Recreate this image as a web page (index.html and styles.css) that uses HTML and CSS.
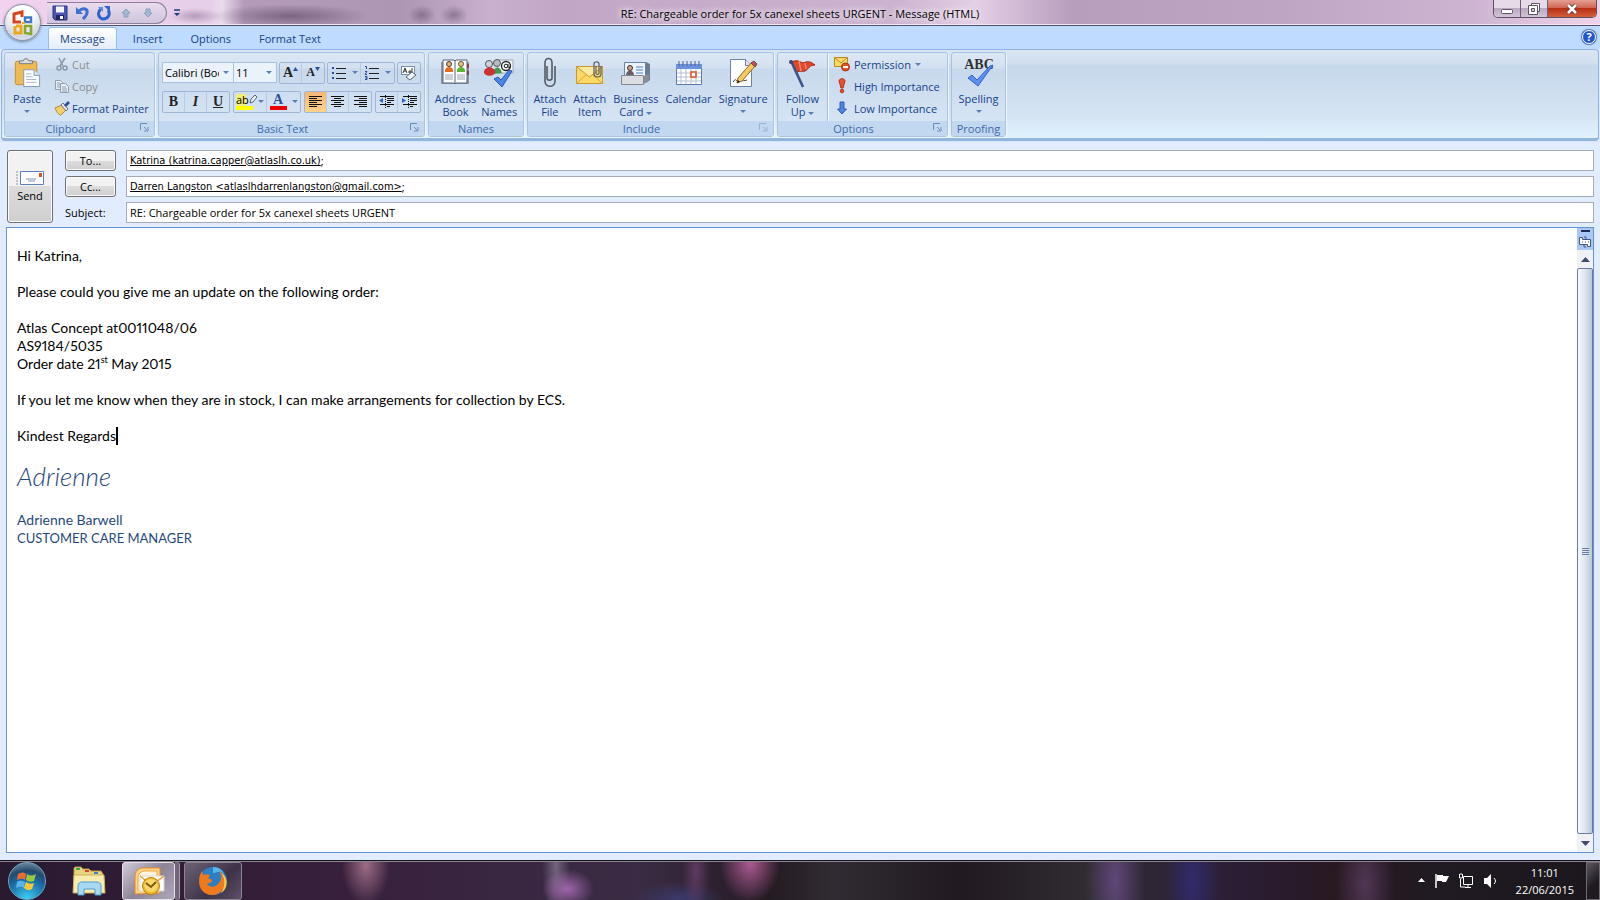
FILE: index.html
```
<!DOCTYPE html>
<html lang="en">
<head>
    <meta charset="UTF-8">
    <meta name="viewport" content="width=device-width, initial-scale=1.0">
    <title>RE: Chargeable order for 5x canexel sheets URGENT - Message (HTML)</title>
    <link rel="stylesheet" href="styles.css">
</head>
<body>

<!-- Title bar -->
<header class="titlebar">
    <div class="title-left">
        <div class="quick-access">
            <button class="qa-btn" aria-label="Save">
                <svg width="16" height="16" viewBox="0 0 16 16"><path d="M1 1h14v14H3l-2-2z" fill="#4a55b5" stroke="#2c357f"/><path d="M4 1.500h8v6H4z" fill="#f4f6ff"/><path d="M4 10h8v5H4z" fill="#20285e"/><path d="M8 11h3v3H8z" fill="#fff"/></svg>
            </button>
            <button class="qa-btn" aria-label="Undo">
                <svg width="16" height="16" viewBox="0 0 16 16"><path d="M5 6c4-4 9-2 8 2-.5 3-2 4-4 6" fill="none" stroke="#3c6fd0" stroke-width="3"/><path d="M2 2v7h7z" fill="#3c6fd0"/></svg>
            </button>
            <button class="qa-btn" aria-label="Redo">
                <svg width="16" height="16" viewBox="0 0 16 16"><path d="M5 4c-4 3-3 9 2 10 5 0 8-5 5-9" fill="none" stroke="#2f62cc" stroke-width="3"/><path d="M8 1h6v6z" fill="#2f62cc"/><path d="M2 2h5v5z" fill="#5d8be0"/></svg>
            </button>
            <button class="qa-btn" aria-label="Previous item">
                <svg width="16" height="16" viewBox="0 0 16 16"><path d="M8 4l4 4h-2v4H6V8H4z" fill="#a5b8d2" stroke="#8a9fbd"/></svg>
            </button>
            <button class="qa-btn" aria-label="Next item">
                <svg width="16" height="16" viewBox="0 0 16 16"><path d="M8 12l4-4h-2V4H6v4H4z" fill="#a5b8d2" stroke="#8a9fbd"/></svg>
            </button>
        </div>
        <button class="qa-more" aria-label="Customize Quick Access Toolbar">
            <svg width="8" height="8" viewBox="0 0 8 8"><path d="M1 1h6" stroke="#1e3c78" stroke-width="1.500"/><path d="M1 4h6L4 7z" fill="#1e3c78"/></svg>
        </button>
    </div>
    <h1 class="window-title">RE: Chargeable order for 5x canexel sheets URGENT - Message (HTML)</h1>
    <div class="title-right">
        <div class="window-buttons">
            <button class="win-btn" aria-label="Minimize">
                <svg width="14" height="12" viewBox="0 0 14 12"><rect x="1.500" y="6.500" width="11" height="4" rx="1" fill="#fff" stroke="#5b5463"/></svg>
            </button>
            <button class="win-btn" aria-label="Restore">
                <svg width="14" height="14" viewBox="0 0 14 14"><path d="M4.500 1.500h8v8h-8z" fill="#fff" stroke="#5b5463"/><path d="M1.500 3.500h9v9h-9z" fill="#fff" stroke="#5b5463"/><path d="M4.500 6.500h3v3h-3z" fill="#ccc" stroke="#5b5463"/></svg>
            </button>
            <button class="win-btn win-close" aria-label="Close">
                <svg width="14" height="12" viewBox="0 0 14 12"><path d="M3 2l8 8M11 2l-8 8" stroke="#6b3030" stroke-width="4.500"/><path d="M3 2l8 8M11 2l-8 8" stroke="#fff" stroke-width="2.600"/></svg>
            </button>
        </div>
    </div>
</header>

<button class="office-button" aria-label="Office Button">
    <svg width="24" height="26" viewBox="0 0 24 26" fill="none" stroke-width="3">
        <path d="M10 12H3V4l8-2v5" stroke="#d4471c"/>
        <path d="M14 7.500h6V12h-6z" stroke="#3f78c8" stroke-width="2.400"/>
        <path d="M5 16h5v7H4v-7" stroke="#eda61d"/>
        <path d="M14 16h6v8l-6-1z" stroke="#86a92c" stroke-width="2.600"/>
        <path d="M11 13h3" stroke="#f6a821" stroke-width="2"/>
    </svg>
</button>

<!-- Ribbon tabs -->
<nav class="tabs">
    <a href="#message" class="tab active">Message</a>
    <a href="#insert" class="tab">Insert</a>
    <a href="#options" class="tab">Options</a>
    <a href="#format" class="tab">Format Text</a>
    <button class="help" aria-label="Help">?</button>
</nav>

<!-- Ribbon -->
<section class="ribbon" id="message">
    <div class="group group-clipboard">
        <div class="group-body">
            <button class="big-btn">
                <svg width="28" height="32" viewBox="0 0 30 32"><rect x="2.500" y="3.500" width="23" height="25" rx="2" fill="#f0b954" stroke="#c88a2c"/><path d="M7 6V3h4c0-3 6-3 6 0h4v3z" fill="#d9dbe0" stroke="#6e7480"/><path d="M11.500 12.500h11l6 6v12h-17z" fill="#fff" stroke="#7d93b5"/><path d="M22.500 12.500v6h6" fill="#dce6f4" stroke="#7d93b5"/><path d="M14 17h6M14 20h7M14 23h11M14 26h11" stroke="#9db2d0"/></svg>
                <span>Paste</span>
                <i class="arrow"></i>
            </button>
            <div class="small-list">
                <button class="small-btn" disabled>
                    <svg width="16" height="16" viewBox="0 0 16 16" fill="none" stroke="#8b98aa" stroke-width="1.500"><path d="M5 2l4 8M11 2l-5 8"/><circle cx="5" cy="12" r="2"/><circle cx="11" cy="12" r="2"/></svg>
                    Cut
                </button>
                <button class="small-btn" disabled>
                    <svg width="16" height="16" viewBox="0 0 16 16" fill="#e9eef5" stroke="#8f9db1"><path d="M1.500 2.500h5l2 2v7h-7z"/><path d="M6.500 5.500h5l3 3v6h-8z"/><path d="M8 9h4M8 11h5M8 13h5M3 5h3M3 7h3M3 9h3"/></svg>
                    Copy
                </button>
                <button class="small-btn">
                    <svg width="16" height="16" viewBox="0 0 16 16"><path d="M1 8l7-3 4 5-5 5c-2 0-4-2-6-7z" fill="#f3cf6a" stroke="#b58a2e"/><path d="M7 5l2-2 5 6-2 2z" fill="#e8e8ee" stroke="#6b7180"/><path d="M10 5l4-4 2 2-4 4z" fill="#2d4f9c"/></svg>
                    Format Painter
                </button>
            </div>
        </div>
        <div class="group-label">Clipboard<button class="launcher" aria-label="Clipboard options"><svg width="9" height="9" viewBox="0 0 9 9"><path d="M.5 7V.5H7M4 4l3 3M8 4v4H4" fill="none" stroke="#6c8cba"/></svg></button></div>
    </div>

    <div class="group group-text">
        <div class="group-body text-tools">
            <div class="tool-row">
                <div class="combos">
                    <span class="combo combo-font"><select aria-label="Font"><option>Calibri (Body)</option></select></span>
                    <span class="combo combo-size"><select aria-label="Font size"><option>11</option></select></span>
                </div>
                <div class="tool-set">
                    <button class="tool grow" aria-label="Grow font">A<svg width="5" height="4" viewBox="0 0 5 4"><path d="M0 4h5L2.500 0z" fill="#2b4f94"/></svg></button>
                    <button class="tool shrink" aria-label="Shrink font">A<svg width="5" height="4" viewBox="0 0 5 4"><path d="M0 0h5L2.500 4z" fill="#2b4f94"/></svg></button>
                </div>
                <div class="tool-set">
                    <button class="tool wide" aria-label="Bullets"><svg width="16" height="16" viewBox="0 0 16 16"><path d="M5 3.500h10M5 8.500h10M5 13.500h10" stroke="#222"/><path d="M1 2h2v2H1zM1 7h2v2H1zM1 12h2v2H1z" fill="#2b4f94"/></svg><i class="arrow"></i></button>
                    <button class="tool wide" aria-label="Numbering"><svg width="16" height="16" viewBox="0 0 16 16"><path d="M5 3.500h10M5 8.500h10M5 13.500h10" stroke="#222"/><path d="M1 1.500h1.500V4M1 6.500h2l-2 3h2M1 11.500h2v3H1M1 13h2" fill="none" stroke="#2b4f94"/></svg><i class="arrow"></i></button>
                </div>
                <div class="tool-set">
                    <button class="tool" aria-label="Clear formatting"><svg width="18" height="18" viewBox="0 0 18 18"><rect x="1.500" y="2.500" width="13" height="8" fill="#fff" stroke="#7c8fae"/><path d="M3 9l2-5 2 5M4 7h2M9 7h2v2H9zM12 4v5" fill="none" stroke="#333"/><path d="M6 13l6-5 4 3-6 5z" fill="#f4f6fa" stroke="#59657a"/></svg></button>
                </div>
            </div>
            <div class="tool-row">
                <div class="tool-set">
                    <button class="tool bold">B</button>
                    <button class="tool italic">I</button>
                    <button class="tool underline">U</button>
                </div>
                <div class="tool-set">
                    <button class="tool wide" aria-label="Highlight"><span class="swatch swatch-yellow">ab<svg width="9" height="10" viewBox="0 0 9 10"><path d="M1 9l1-4 4-4 2 2-4 5z" fill="#e9edf4" stroke="#59657a"/></svg></span><i class="arrow"></i></button>
                    <button class="tool wide" aria-label="Font color"><span class="swatch swatch-red">A</span><i class="arrow"></i></button>
                </div>
                <div class="tool-set">
                    <button class="tool pressed" aria-label="Align left"><svg width="15" height="13" viewBox="0 0 15 13"><path d="M1 1.500h13M1 3.500h8M1 5.500h13M1 7.500h8M1 9.500h13M1 11.500h8" stroke="#111"/></svg></button>
                    <button class="tool" aria-label="Center"><svg width="15" height="13" viewBox="0 0 15 13"><path d="M1 1.500h13M4 3.500h7M1 5.500h13M4 7.500h7M1 9.500h13M4 11.500h7" stroke="#111"/></svg></button>
                    <button class="tool" aria-label="Align right"><svg width="15" height="13" viewBox="0 0 15 13"><path d="M1 1.500h13M6 3.500h8M1 5.500h13M6 7.500h8M1 9.500h13M6 11.500h8" stroke="#111"/></svg></button>
                </div>
                <div class="tool-set">
                    <button class="tool" aria-label="Decrease indent"><svg width="17" height="14" viewBox="0 0 17 14"><path d="M2 1.500h14M9 3.500h7M9 5.500h7M9 7.500h4M2 9.500h14M9 11.500h3" stroke="#111"/><path d="M7.500 0v14" stroke="#111" stroke-dasharray="1 1"/><path d="M5 3v5L1 5.500z" fill="#2f62cc"/></svg></button>
                    <button class="tool" aria-label="Increase indent"><svg width="17" height="14" viewBox="0 0 17 14"><path d="M2 1.500h14M9 3.500h7M9 5.500h7M9 7.500h4M2 9.500h14M9 11.500h3" stroke="#111"/><path d="M7.500 0v14" stroke="#111" stroke-dasharray="1 1"/><path d="M1 3v5l4-2.500z" fill="#2f62cc"/></svg></button>
                </div>
            </div>
        </div>
        <div class="group-label">Basic Text<button class="launcher" aria-label="Font options"><svg width="9" height="9" viewBox="0 0 9 9"><path d="M.5 7V.5H7M4 4l3 3M8 4v4H4" fill="none" stroke="#6c8cba"/></svg></button></div>
    </div>

    <div class="group group-names">
        <div class="group-body">
            <button class="big-btn">
                <svg width="30" height="30" viewBox="0 0 30 30"><path d="M1 4h28v22H1z" fill="#8c97a8"/><path d="M3 2h11l1 1 1-1h11v23H16l-1 1-1-1H3z" fill="#fdfdfe" stroke="#59657a"/><path d="M15 3v22" stroke="#59657a"/><circle cx="9" cy="6" r="2.500" fill="#e9b184" stroke="#4b372c"/><path d="M5 14v-2c1-4 7-4 8 0v2z" fill="#ea6a1c"/><circle cx="21" cy="6" r="2.500" fill="#e8c48a" stroke="#6b5a3c"/><path d="M17 14v-2c1-4 7-4 8 0v2z" fill="#5cb52f"/><path d="M5 17h8M5 19h8M5 21h8M17 17h8M17 19h8M17 21h8" stroke="#9aa5b7"/><path d="M28 6v4M28 13v4" stroke="#844" stroke-width="2"/></svg>
                <span>Address<br>Book</span>
            </button>
            <button class="big-btn">
                <svg width="32" height="30" viewBox="0 0 32 30"><path d="M15 2h15v13H15z" fill="#f9fafc" stroke="#9aa5b7"/><circle cx="23" cy="8" r="4.500" fill="none" stroke="#222" stroke-width="1.300"/><circle cx="23" cy="8" r="1.800" fill="none" stroke="#222"/><path d="M25 6v3c0 2 2 1 2-1" fill="none" stroke="#222"/><circle cx="14" cy="5" r="3.500" fill="#b7bcc6" stroke="#555"/><path d="M10 16c0-8 8-8 9-1z" fill="#3b9b4b"/><circle cx="6" cy="6" r="3.500" fill="#cfd2d9" stroke="#555"/><path d="M1 14c0-6 11-6 11 0 0 5-11 5-11 0z" fill="#cf3030"/><path d="M11 21l4-2 3 3 8-10 3 1-10 16z" fill="#4c84e2" stroke="#2b58b5"/></svg>
                <span>Check<br>Names</span>
            </button>
        </div>
        <div class="group-label">Names</div>
    </div>

    <div class="group group-include">
        <div class="group-body">
            <button class="big-btn">
                <svg width="14" height="32" viewBox="0 0 14 32"><path d="M4 9v12c0 3 5 3 5 0V6c0-6-7-6-7 0v18c0 7 10 7 10 0V9" fill="none" stroke="#555b66" stroke-width="1.600"/></svg>
                <span>Attach<br>File</span>
            </button>
            <button class="big-btn">
                <svg width="30" height="30" viewBox="0 0 30 30"><path d="M1.500 8.500h26v17h-26z" fill="#fbd967" stroke="#c79a2b"/><path d="M2 25l10-9M27 25l-10-9" stroke="#d6a93a"/><path d="M2 9l12.500 10L27 9" fill="#fdeaa0" stroke="#c79a2b"/><path d="M21 8v7c0 2 3 2 3 0V6c0-3-5-3-5 0v10c0 4 7 4 7 0V8" fill="none" stroke="#555b66" stroke-width="1.200"/></svg>
                <span>Attach<br>Item</span>
            </button>
            <button class="big-btn">
                <svg width="32" height="30" viewBox="0 0 32 30"><path d="M6 4h20l4 2v16l-4 3z" fill="#6d7c93"/><path d="M4.500 4.500h21v17h-21z" fill="#eef4fd" stroke="#6b83a8"/><circle cx="10" cy="10" r="2.500" fill="#d9a07a" stroke="#333"/><path d="M6 17c0-6 8-6 8 0z" fill="#5a6474"/><path d="M10 13v3" stroke="#d22"/><path d="M16 9h7M16 12h7M16 15h7" stroke="#4b83d4"/><path d="M1.500 17.500h22v9h-22z" fill="#dcdde1" stroke="#84878f"/><path d="M24 26l5-4v-6l-5 2z" fill="#8b8e95"/></svg>
                <span>Business<br>Card <i class="arrow"></i></span>
            </button>
            <button class="big-btn">
                <svg width="28" height="28" viewBox="0 0 28 28"><path d="M1.500 5.500h25v20h-25z" fill="#fff" stroke="#5b79b0"/><path d="M1 5h26v5H1z" fill="#6c92dd"/><path d="M4 2v5M8 2v5M12 2v5M16 2v5M20 2v5M24 2v5" stroke="#49618f"/><path d="M2 14h24M2 18h24M2 22h24M6 10v15M11 10v15M16 10v15M21 10v15" stroke="#b3bfd4"/><path d="M16 13h5v5h-5z" fill="#fff" stroke="#e0502a" stroke-width="1.500"/></svg>
                <span>Calendar</span>
            </button>
            <button class="big-btn">
                <svg width="30" height="30" viewBox="0 0 30 30"><path d="M2.500 1.500h15l6 6v21h-21z" fill="#fff" stroke="#6b83a8"/><path d="M17.500 1.500v6h6" fill="#dce6f4" stroke="#6b83a8"/><path d="M5 24c4-6 3 2 6-1 2-2 2 1 8-1" fill="none" stroke="#444"/><path d="M10 20L24 4l4 3-14 16-5 2z" fill="#f6c95e" stroke="#8a6a2a"/><path d="M23 5l3-2 3 3-2 3z" fill="#c84a58" stroke="#6b4a50"/><path d="M9 25l1-3 2 2z" fill="#222"/></svg>
                <span>Signature</span>
                <i class="arrow"></i>
            </button>
        </div>
        <div class="group-label">Include<button class="launcher" aria-label="Include options" disabled><svg width="9" height="9" viewBox="0 0 9 9"><path d="M.5 7V.5H7M4 4l3 3M8 4v4H4" fill="none" stroke="#6c8cba"/></svg></button></div>
    </div>

    <div class="group group-options">
        <div class="group-body">
            <button class="big-btn">
                <svg width="30" height="30" viewBox="0 0 30 30"><path d="M4 4c8-4 8 3 14 0 4-1 6 1 9 3-6 0-6 4-10 6-4 1-6-1-9 2z" fill="#e2472b" stroke="#a82414"/><path d="M11 3l2 10M17 5l1 6" stroke="#f58a6a" stroke-width="1.500"/><path d="M3 3l12 26" stroke="#3c5487" stroke-width="2.600"/><circle cx="3" cy="4" r="2" fill="#34487a"/></svg>
                <span>Follow<br>Up <i class="arrow"></i></span>
            </button>
            <div class="small-list split">
                <button class="small-btn">
                    <svg width="16" height="16" viewBox="0 0 16 16"><path d="M.5 1.500h13v9H.5z" fill="#fbd967" stroke="#b98a20"/><path d="M1 2l6 5 6-5" fill="none" stroke="#b98a20"/><circle cx="11.500" cy="11" r="4" fill="#e5532d" stroke="#a82f14"/><path d="M9 11h5" stroke="#fff" stroke-width="2"/></svg>
                    Permission <i class="arrow"></i>
                </button>
                <button class="small-btn">
                    <svg width="16" height="16" viewBox="0 0 16 16"><path d="M5 3c0-3 6-3 6 0L9 10H7z" fill="#e5532d" stroke="#b5341a"/><circle cx="8" cy="13" r="1.800" fill="#e5532d" stroke="#b5341a"/></svg>
                    High Importance
                </button>
                <button class="small-btn">
                    <svg width="16" height="16" viewBox="0 0 16 16"><path d="M6 2h4v7h2.500L8 14 3.500 9H6z" fill="#4f83e6" stroke="#2d5cb8"/></svg>
                    Low Importance
                </button>
            </div>
        </div>
        <div class="group-label">Options<button class="launcher" aria-label="Message options"><svg width="9" height="9" viewBox="0 0 9 9"><path d="M.5 7V.5H7M4 4l3 3M8 4v4H4" fill="none" stroke="#6c8cba"/></svg></button></div>
    </div>

    <div class="group group-proofing">
        <div class="group-body">
            <button class="big-btn">
                <svg width="30" height="32" viewBox="0 0 30 32"><text x="15" y="12" text-anchor="middle" class="abc">ABC</text><path d="M4 21l4-3 5 5L26 9l3-1-15 21z" fill="#5b8ff0" stroke="#2f62cc"/></svg>
                <span>Spelling</span>
                <i class="arrow"></i>
            </button>
        </div>
        <div class="group-label">Proofing</div>
    </div>
</section>

<!-- Message window -->
<main class="compose">
    <form class="envelope">
        <button type="button" class="send">
            <svg width="30" height="16" viewBox="0 0 30 16"><path d="M1 2h3M1 5h3M1 8h3M1 11h3M1 14h3" stroke="#8a93a3" stroke-dasharray="2 1"/><path d="M5.500 1.500h23v13h-23z" fill="#fff" stroke="#5c7fb8"/><path d="M24 3h3v4h-3z" fill="#d9532b"/><path d="M11 9h10M13 11h7" stroke="#7f93b5"/></svg>
            Send
        </button>
        <button type="button" class="pick">To...</button>
        <div class="field">
            <input type="text" class="recipient" aria-label="To" value="Katrina (katrina.capper@atlaslh.co.uk)">;
        </div>
        <button type="button" class="pick">Cc...</button>
        <div class="field">
            <input type="text" class="recipient" aria-label="Cc" value="Darren Langston &lt;atlaslhdarrenlangston@gmail.com&gt;">;
        </div>
        <label for="subject">Subject:</label>
        <div class="field">
            <input type="text" id="subject" value="RE: Chargeable order for 5x canexel sheets URGENT">
        </div>
    </form>

    <div class="editor">
        <article class="message" aria-label="Message body">
            <p>Hi Katrina,</p>
            <p>Please could you give me an update on the following order:</p>
            <p>Atlas Concept at0011048/06<br>AS9184/5035<br>Order date 21<sup>st</sup> May 2015</p>
            <p>If you let me know when they are in stock, I can make arrangements for collection by ECS.</p>
            <p>Kindest Regards<span class="caret"></span></p>
            <p class="autograph">Adrienne</p>
            <p class="signature">Adrienne Barwell<br><span class="job-title">CUSTOMER CARE MANAGER</span></p>
        </article>
        <div class="scrollbar">
            <button class="browse" aria-label="Select browse object">
                <svg width="16" height="20" viewBox="0 0 16 20"><path d="M4 3h9" stroke="#1f2c55" stroke-width="2"/><path d="M2.500 9.500h3v2h8v7h-3v-2h-8z" fill="#fff" stroke="#44557f"/><path d="M7 9h2v2M9 19H7v-2M5 14h1M8 14h1M11 14h1" fill="none" stroke="#44557f"/></svg>
            </button>
            <button class="scroll-arrow" aria-label="Scroll up"><svg width="9" height="5" viewBox="0 0 9 5"><path d="M0 5h9L4.500 0z" fill="#3f4a6c"/></svg></button>
            <div class="thumb"><span></span><span></span><span></span><span></span></div>
            <button class="scroll-arrow" aria-label="Scroll down"><svg width="9" height="5" viewBox="0 0 9 5"><path d="M0 0h9L4.500 5z" fill="#3f4a6c"/></svg></button>
        </div>
    </div>
</main>

<!-- Taskbar -->
<footer class="taskbar">
    <button class="start" aria-label="Start">
        <svg width="24" height="24" viewBox="0 0 24 24"><path d="M3 5c3-2 6-2 8 0l-1 6c-3-2-5-1-8 0z" fill="#ee6a34"/><path d="M12 5c3 2 6 2 9 0l-2 7c-3 1-5 1-8-1z" fill="#9cc93c"/><path d="M2 13c3-2 5-1 8 0l-1 6c-3-2-5-1-8 0z" fill="#59b4ec"/><path d="M11 13c3 2 5 2 8 1l-2 6c-3 2-5 1-8-1z" fill="#fbc938"/></svg>
    </button>
    <button class="explorer" aria-label="Windows Explorer">
        <svg width="34" height="30" viewBox="0 0 34 30"><path d="M2 3c0-2 1-2 2-2h5l2 2h6l2 2h10l2 3v18H2z" fill="#ead37f" stroke="#b5983f"/><path d="M4 3h4" stroke="#3aa648" stroke-width="2"/><path d="M13 5h4" stroke="#d9442c" stroke-width="2"/><path d="M22 7h4" stroke="#3b82d6" stroke-width="2"/><path d="M2 9h30l1 18H1z" fill="#f8ecb0" stroke="#cdb258"/><path d="M6 29V20c0-3 2-4 4-4h15c2 0 4 1 4 4v9h-6v-6H12v6z" fill="#a9d8f3" stroke="#4d9fd1"/></svg>
    </button>
    <button class="task task-active" aria-label="Outlook">
        <svg width="32" height="28" viewBox="0 0 32 28"><path d="M2 27V9c0-5 4-8 8-8h17v25z" fill="#fbd08a" stroke="#e38f1d"/><path d="M5 24V11c0-4 3-7 7-7h12v6" fill="#fff3da" stroke="#f0a840"/><path d="M7 9h24v15H7z" fill="#fff" stroke="#d8d8d8"/><path d="M7 9l12 9 12-9" fill="none" stroke="#e2a235" stroke-width="1.500"/><circle cx="18" cy="19" r="8.500" fill="#f3b92c" stroke="#b98212"/><circle cx="18" cy="18.500" r="6.500" fill="#fbda6b"/><path d="M13 16l5 4 5-5" fill="none" stroke="#7d5a10" stroke-width="2"/></svg>
    </button>
    <span class="stack-edge"></span>
    <button class="task" aria-label="Firefox">
        <svg width="32" height="32" viewBox="0 0 32 32"><circle cx="16" cy="16" r="14" fill="#2c7fc4"/><path d="M16 2c6 0 9 3 11 6-6-3-8 0-11 0z" fill="#58b5ea"/><path d="M22 6c6 4 8 12 4 18-5 8-17 8-22 0C1 18 2 10 5 6c0 2 1 3 2 4 2-1 4-1 6 0l-2 3 4 2c0 3-3 3-5 4 3 4 8 3 11 0 4-4 4-8 1-13z" fill="#ee7a1c"/><path d="M24 7c8 6 7 17 0 21 4-6 5-13 0-21z" fill="#fbd13c"/></svg>
    </button>
    <div class="tray">
        <svg width="9" height="5" viewBox="0 0 9 5"><path d="M1 4h7L4.500 0z" fill="#fff"/></svg>
        <svg width="16" height="16" viewBox="0 0 16 16"><path d="M2 1v14" stroke="#fff" stroke-width="1.500"/><path d="M3 2h6v1h6l-3 6H8V8H3z" fill="#fff"/></svg>
        <svg width="16" height="16" viewBox="0 0 16 16" fill="none" stroke="#fff"><path d="M5.500 3.500h9v8h-9z"/><path d="M7 14.500h6M10 12v2M2.500 6v8h5M1.500 1v4h3V1M3 0v2" /></svg>
        <svg width="16" height="16" viewBox="0 0 16 16"><path d="M2 5h3l4-4v14l-4-4H2z" fill="#fff"/><path d="M12 5c2 2 2 4 0 6" fill="none" stroke="#fff"/></svg>
    </div>
    <div class="clock">11:01<br>22/06/2015</div>
    <button class="show-desktop" aria-label="Show desktop"></button>
</footer>

</body>
</html>
```
FILE: styles.css
```
/* Basic reset */
* {
    margin: 0;
    padding: 0;
    box-sizing: border-box;
}

body {
    display: flex;
    flex-direction: column;
    min-height: 100vh;
    font-family: 'Open Sans', 'Noto Sans', sans-serif;
    font-size: 11px;
    background-color: #e1ecfe;
    color: #000;
}

button,
input,
select {
    font: inherit;
    color: inherit;
    background: none;
    border: none;
}

a {
    text-decoration: none;
}

svg {
    flex: none;
}

/* Title bar */
.titlebar {
    display: flex;
    height: 26px;
    border-bottom: 1px solid #55506a;
    box-shadow: inset 0 -1px #f3e8f5;
    background:
        radial-gradient(ellipse 80px 12px at 290px 16px, rgba(70, 50, 80, 0.5), transparent),
        radial-gradient(ellipse 14px 10px at 422px 15px, rgba(70, 50, 80, 0.4), transparent),
        radial-gradient(ellipse 14px 10px at 454px 15px, rgba(70, 50, 80, 0.4), transparent),
        radial-gradient(ellipse 26px 8px at 195px 16px, rgba(110, 80, 120, 0.4), transparent),
        linear-gradient(90deg, #f1d2ef 0, #e6cfe8 210px, #eadbee 222px, #b49bba 244px, #ad95b4 400px, #c9b0cf 490px, #c2a6c6 35%, #cdb3d0 56%, #e3cfe6 61%, #b89ebd 67%, #bfa5c4 80%, #cdb5d2 92%, #f0d3e8 100%);
}

.title-left,
.title-right {
    display: flex;
    flex: 1;
    align-items: flex-start;
}

.title-right {
    justify-content: flex-end;
}

.quick-access {
    display: flex;
    align-items: center;
    width: 120px;
    height: 22px;
    margin: 2px 0 0 47px;
    padding-left: 5px;
    gap: 6px;
    border: 1px solid #8c7f9b;
    border-left: none;
    border-radius: 0 12px 12px 0;
    background: linear-gradient(#e9dcee, #cfc4dc);
}

.qa-btn {
    display: flex;
}

.qa-more {
    height: 24px;
    padding: 0 6px;
}

.window-title {
    font-size: 11px;
    font-weight: normal;
    line-height: 27px;
    white-space: nowrap;
    text-shadow: 0 0 6px #fff, 0 0 8px #fff;
}

.window-buttons {
    display: flex;
    height: 18px;
    margin-right: 3px;
    border: 1px solid #5d5066;
    border-top: none;
    border-radius: 0 0 5px 5px;
    overflow: hidden;
}

.win-btn {
    display: flex;
    align-items: center;
    justify-content: center;
    width: 27px;
    border-right: 1px solid #6d6076;
    background: linear-gradient(#e6dae9 50%, #b9a8c0 50%, #d4c4d8);
}

.win-close {
    width: 48px;
    border-right: none;
    background: linear-gradient(#e3a094 0, #d0604b 50%, #b92f16 50%, #d2603c);
}

/* Office button lies over the title bar and the tabs */
.office-button {
    position: absolute;
    top: 4px;
    left: 4px;
    display: flex;
    align-items: center;
    justify-content: center;
    width: 37px;
    height: 37px;
    border: 1px solid #8a8f9e;
    border-radius: 50%;
    background: radial-gradient(circle at 50% 20%, #fff 30%, #d0d6e2 75%, #f5f7fb);
    box-shadow: 0 1px 3px #6d7f9e;
}

/* Tabs */
.tabs {
    display: flex;
    align-items: flex-end;
    height: 23px;
    padding: 0 4px 0 48px;
    background-color: #bfdbff;
}

.tab {
    height: 22px;
    padding: 0 14px;
    line-height: 24px;
    color: #15428b;
}

.tab.active {
    padding: 0 11px;
    margin-right: 2px;
    border: 1px solid #9bbbe3;
    border-bottom: none;
    border-radius: 3px 3px 0 0;
    line-height: 22px;
    background: linear-gradient(#fff, #e3edf9);
}

.help {
    width: 14px;
    height: 14px;
    margin: 0 0 5px auto;
    border: 1px solid #fff;
    border-radius: 50%;
    line-height: 12px;
    font-weight: bold;
    color: #fff;
    background-color: #2456c8;
    box-shadow: 0 0 1px 1px #4c6fae;
}

/* Ribbon */
.ribbon {
    display: flex;
    gap: 3px;
    height: 92px;
    margin: 0 1px;
    padding: 2px 2px 1px;
    border: 1px solid #8db2e3;
    border-bottom: 3px solid #92b6dd;
    border-radius: 4px;
    background: linear-gradient(#dbe6f4 0, #d0dff0 15%, #c6d8ec 18%, #d5e4f3 75%, #e0f3ff 100%);
}

.group {
    display: flex;
    flex-direction: column;
    border: 1px solid #a9c3e2;
    border-radius: 3px;
    box-shadow: 1px 1px #eff6fd;
    background: linear-gradient(#dde8f5 0, #d2e0f0 18%, #c8d9ed 20%, #d9e8f6 100%);
}

.group-clipboard { width: 151px; }
.group-text { width: 267px; }
.group-names { width: 96px; }
.group-include { width: 247px; }
.group-options { width: 171px; }
.group-proofing { width: 55px; }

.group-body {
    display: flex;
    flex: 1;
    gap: 1px;
    justify-content: center;
    min-height: 0;
}

.group-clipboard .group-body,
.group-options .group-body {
    justify-content: flex-start;
    padding-left: 6px;
}

.group-label {
    position: relative;
    flex: none;
    height: 15px;
    line-height: 15px;
    text-align: center;
    color: #3e6aaa;
    background-color: #c1d8f0;
}

.group-clipboard .group-label,
.group-text .group-label,
.group-include .group-label,
.group-options .group-label {
    padding-right: 18px;
}

.launcher {
    position: absolute;
    top: 2px;
    right: 5px;
    display: flex;
}

.launcher:disabled {
    opacity: 0.5;
}

.arrow {
    display: inline-block;
    border: 3px solid transparent;
    border-top-color: #5b7fb5;
    border-bottom: none;
    vertical-align: middle;
}

.big-btn {
    display: flex;
    flex-direction: column;
    align-items: center;
    flex: none;
    padding: 4px 2px 0;
    line-height: 13px;
    color: #15428b;
}

.group-include .big-btn {
    padding: 4px 3px 0;
}

.big-btn svg {
    height: 32px;
}

.big-btn > span {
    margin-top: 3px;
    white-space: nowrap;
}

.big-btn > .arrow {
    margin-top: 5px;
}

.small-list {
    display: flex;
    flex-direction: column;
    margin-left: 10px;
}

.small-list.split {
    margin-left: 6px;
    padding-left: 5px;
    border-left: 1px solid #f4f9ff;
    box-shadow: -1px 0 #a9bfdb;
}

.small-btn {
    display: flex;
    align-items: center;
    gap: 2px;
    height: 22px;
    white-space: nowrap;
    color: #15428b;
}

.split .small-btn {
    gap: 4px;
}

.small-btn:disabled {
    color: #8d8d8d;
}

/* Basic Text tools */
.text-tools {
    flex-direction: column;
    gap: 7px;
    padding: 0 3px;
}

.tool-row {
    display: flex;
    justify-content: space-between;
    height: 22px;
}

.combos {
    display: flex;
}

.combo {
    position: relative;
    height: 21px;
    border: 1px solid #abc1de;
    background-color: #eaf2fb;
}

.combo::after {
    content: '';
    position: absolute;
    top: 8px;
    right: 4px;
    border: 3px solid transparent;
    border-top-color: #5b7fb5;
    border-bottom: none;
}

.combo-font { width: 72px; }
.combo-size { width: 43px; border-left: none; }

.combo select {
    display: block;
    width: 100%;
    height: 19px;
    padding: 0 14px 0 2px;
    appearance: none;
    overflow: hidden;
}

.tool-set {
    display: flex;
    border: 1px solid #9fb6d6;
    border-radius: 2px;
}

.tool {
    display: flex;
    align-items: center;
    justify-content: center;
    width: 22px;
    border-right: 1px solid #b7cbe4;
}

.tool:last-child {
    border-right: none;
}

.tool.wide {
    width: 33px;
    gap: 5px;
}

.tool.pressed {
    background: linear-gradient(#f6b774, #fdd28a);
}

.bold,
.italic,
.underline,
.grow,
.shrink {
    font-family: 'Liberation Serif', serif;
    font-size: 14px;
    font-weight: bold;
    color: #222;
}

.italic { font-style: italic; }
.underline { text-decoration: underline; }
.shrink { font-size: 12px; }

.grow svg,
.shrink svg {
    align-self: flex-start;
    margin-top: 4px;
}

.swatch {
    display: flex;
    width: 17px;
    height: 16px;
    border-bottom: 4px solid #ff0;
    line-height: 11px;
}

.swatch-yellow {
    background: linear-gradient(90deg, #f4ee72 60%, transparent 60%);
}

.swatch-red {
    justify-content: center;
    border-bottom-color: #e00;
    font: bold 14px/12px 'Liberation Serif', serif;
    color: #2b4f94;
}

.abc {
    font: bold 14px 'Liberation Serif', serif;
    fill: #333;
}

/* Envelope fields */
.compose {
    display: flex;
    flex-direction: column;
    flex: 1;
    padding: 8px 6px 7px;
    border-top: 1px solid #d5e4f7;
}

.envelope {
    display: grid;
    grid-template-columns: 48px 51px 1fr;
    grid-template-rows: repeat(3, 21px);
    gap: 5px 10px;
    padding-left: 1px;
}

.send,
.pick {
    border: 1px solid #707070;
    border-radius: 3px;
    background: linear-gradient(#f2f2f2 50%, #dcdcdc 50%, #cfcfcf);
    box-shadow: inset 0 0 0 1px #fbfbfb;
}

.send {
    display: flex;
    flex-direction: column;
    align-items: center;
    justify-content: center;
    gap: 2px;
    grid-row: span 3;
    margin-right: 2px;
}

.envelope label {
    line-height: 21px;
}

.field {
    display: flex;
    align-items: center;
    padding: 0 3px;
    border: 1px solid #a5acb8;
    background-color: #fff;
}

.field input {
    width: 100%;
    outline: none;
}

.field .recipient {
    width: auto;
    field-sizing: content;
    font-family: 'DejaVu Sans Condensed', 'DejaVu Sans', sans-serif;
    text-decoration: underline;
}

/* Message body */
.editor {
    display: flex;
    flex: 1;
    margin-top: 4px;
    border: 1px solid #6593cf;
    background-color: #fff;
}

.message {
    flex: 1;
    padding: 19px 10px;
    font-family: Lato, 'Open Sans', sans-serif;
    font-size: 14px;
    font-variant-ligatures: none;
    font-variant-numeric: proportional-nums;
    line-height: 18px;
}

.message p {
    margin-bottom: 18px;
}

.message sup {
    font-size: 9px;
    line-height: 0;
}

.caret {
    display: inline-block;
    width: 2px;
    height: 18px;
    background-color: #000;
    vertical-align: top;
}

.message .autograph {
    margin-bottom: 22px;
    font-size: 26px;
    font-style: italic;
    font-weight: 300;
    line-height: 26px;
    color: #1f497d;
}

.message .signature {
    color: #1f497d;
}

.job-title {
    font-size: 13px;
}

.scrollbar {
    display: flex;
    flex-direction: column;
    width: 16px;
    background-color: #f0f1f4;
}

.browse {
    display: flex;
    height: 22px;
    background-color: #a9c8f5;
}

.scroll-arrow {
    display: flex;
    align-items: center;
    justify-content: center;
    height: 18px;
}

.thumb {
    display: flex;
    flex: 1;
    flex-direction: column;
    align-items: center;
    justify-content: center;
    gap: 1px;
    border: 1px solid #6a7ba5;
    border-radius: 2px;
    background: linear-gradient(90deg, #f6f9fc, #dfe6ee 50%, #b9c8da);
}

.thumb span {
    width: 7px;
    height: 1px;
    background-color: #6a7ba5;
}

/* Taskbar */
.taskbar {
    display: flex;
    align-items: center;
    height: 40px;
    padding-left: 8px;
    border-top: 1px solid #16121c;
    box-shadow: inset 0 1px #8a8390;
    background:
        radial-gradient(ellipse 24px 40px at 366px 4px, rgba(200, 140, 165, 0.7), transparent),
        radial-gradient(ellipse 26px 20px at 568px 28px, rgba(190, 120, 205, 0.75), transparent),
        radial-gradient(ellipse 14px 50px at 556px 4px, rgba(170, 160, 185, 0.5), transparent),
        radial-gradient(ellipse 30px 40px at 750px 2px, rgba(205, 105, 175, 0.8), transparent),
        radial-gradient(ellipse 14px 40px at 696px 10px, rgba(140, 80, 140, 0.5), transparent),
        radial-gradient(ellipse 44px 18px at 680px 38px, rgba(65, 70, 140, 0.6), transparent),
        radial-gradient(ellipse 30px 90px at 1115px 20px, rgba(115, 85, 150, 0.7), transparent),
        radial-gradient(ellipse 28px 80px at 1192px 20px, rgba(50, 45, 120, 0.8), transparent),
        radial-gradient(ellipse 30px 70px at 1365px 24px, rgba(110, 75, 120, 0.6), transparent),
        linear-gradient(90deg, #291a30 0, #38203c 22%, #3a2c44 40%, #241a22 48%, #302b32 52%, #211a20 60%, #302c32 68%, #2c1f38 76%, #271820 84%, #201a22 90%, #1b171d 100%);
}

.start {
    display: flex;
    align-items: center;
    justify-content: center;
    width: 38px;
    height: 38px;
    border: 1px solid #6fa3bf;
    border-radius: 50%;
    background: radial-gradient(circle at 50% 100%, #3ed0f5, #1b6aa5 50%, #24496b 70%, #8fa9bd);
}

.explorer {
    display: flex;
    margin: 0 16px 0 26px;
}

.task {
    display: flex;
    align-items: center;
    justify-content: center;
    width: 58px;
    height: 38px;
    border: 1px solid #8c8494;
    border-radius: 3px;
    background: linear-gradient(135deg, #6b6374, #3e3248 60%, #5c5068);
}

.task-active {
    width: 53px;
    border-color: #e5e0ea;
    background: linear-gradient(135deg, #d2ccd8, #8d8398 50%, #b0a8ba);
}

.stack-edge {
    width: 5px;
    height: 38px;
    margin-right: 4px;
    border-right: 1px solid #a79fb0;
    border-radius: 0 3px 3px 0;
    background-color: #6f6678;
}

.tray {
    display: flex;
    align-items: center;
    gap: 8px;
    margin-left: auto;
}

.clock {
    padding: 0 12px 0 18px;
    line-height: 17px;
    text-align: center;
    color: #fff;
}

.show-desktop {
    width: 14px;
    height: 38px;
    border: 1px solid #6f6a75;
    background: linear-gradient(135deg, #5a5560, #1e1a20 60%);
}
```
